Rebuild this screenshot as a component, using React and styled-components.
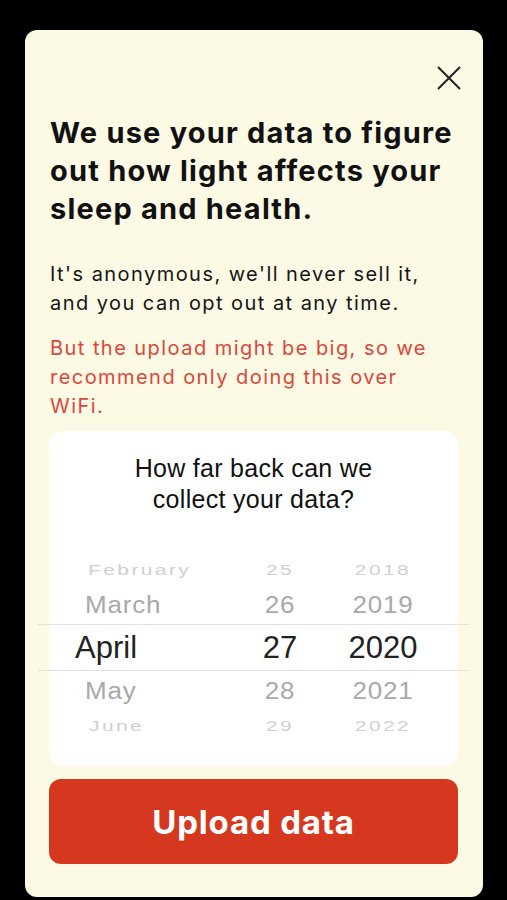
import styled, { createGlobalStyle } from 'styled-components'

const GlobalStyle = createGlobalStyle`
    html, body {
        margin: 0;
        padding: 0;
        background: #000;
    }
`

const Page = styled.div`
    width: 507px;
    height: 900px;
    padding: 30px 24px 0 25px;
    box-sizing: border-box;
    background: #000;
`

const Sheet = styled.div`
    width: 458px;
    height: 867px;
    box-sizing: border-box;
    background: #fcf9e4;
    border-radius: 12px;
    padding: 36px 22px 0 24px;
    display: flex;
    flex-direction: column;
`

const CloseRow = styled.div`
    display: flex;
    justify-content: flex-end;
`

const CloseButton = styled.button`
    width: 24px;
    height: 24px;
    padding: 0;
    border: none;
    background: transparent;
    cursor: pointer;
`

const Heading = styled.h1`
    margin: 24px 0 0 1px;
    max-width: 420px;
    font-family: Inter, "Liberation Sans", sans-serif;
    font-weight: 700;
    font-size: 29px;
    line-height: 38px;
    color: #111;
    letter-spacing: 1.2px;
`

const Paragraph = styled.p`
    margin: ${(p) => p.$top}px 0 0 1px;
    max-width: ${(p) => p.$width}px;
    font-family: Inter, "Liberation Sans", sans-serif;
    font-size: 20px;
    line-height: 29px;
    letter-spacing: 1.45px;
    color: ${(p) => p.$color};
`

const PickerCard = styled.div`
    position: relative;
    margin-top: 10px;
    width: 409px;
    height: 335px;
    box-sizing: border-box;
    background: #fff;
    border-radius: 14px;
    padding: 22px 0 0;
`

const Question = styled.div`
    text-align: center;
    font-family: "Liberation Sans", Arial, sans-serif;
    font-size: 25px;
    line-height: 31px;
    letter-spacing: 0.3px;
    color: #111;
`

const Wheel = styled.div`
    margin-top: 40px;
    display: flex;
    flex-direction: column;
`

const WheelRow = styled.div`
    display: grid;
    grid-template-columns: 195px 72px 134px;
    align-items: center;
    height: ${(p) => p.$height}px;
    font-family: "Liberation Sans", Arial, sans-serif;
    font-size: ${(p) => p.$size}px;
    color: ${(p) => p.$color};
    transform: scaleY(${(p) => p.$squash});
    letter-spacing: ${(p) => p.$spread}px;
`

const MonthCell = styled.span`
    padding-left: ${(p) => p.$indent}px;
`

const NumberCell = styled.span`
    text-align: center;
`

const SelectionLine = styled.div`
    position: absolute;
    left: -11px;
    right: -11px;
    top: ${(p) => p.$top}px;
    height: 1px;
    background: #e2e2e2;
`

const UploadButton = styled.button`
    margin-top: 13px;
    width: 409px;
    height: 85px;
    border: none;
    border-radius: 12px;
    background: #d6381f;
    color: #fff;
    font-family: Inter, "Liberation Sans", sans-serif;
    font-weight: 700;
    font-size: 33px;
    letter-spacing: 0.8px;
    cursor: pointer;
`

const rows = [
    { month: 'February', day: 25, year: 2018, height: 30, size: 21, color: '#d0d0d0', squash: 0.74, spread: 2.4, indent: 39 },
    { month: 'March', day: 26, year: 2019, height: 40, size: 26, color: '#a9a9a9', squash: 0.92, spread: 0.8, indent: 36 },
    { month: 'April', day: 27, year: 2020, height: 46, size: 31, color: '#222', squash: 1, spread: 0, indent: 26 },
    { month: 'May', day: 28, year: 2021, height: 40, size: 26, color: '#a9a9a9', squash: 0.92, spread: 0.8, indent: 36 },
    { month: 'June', day: 29, year: 2022, height: 30, size: 21, color: '#d0d0d0', squash: 0.74, spread: 2.4, indent: 40 },
]

function CloseIcon() {
    return (
        <svg width="24" height="24" viewBox="0 0 24 24">
            <path d="M1 1 L23 23 M23 1 L1 23" stroke="#222" strokeWidth="2" fill="none" />
        </svg>
    )
}

export default function App() {
    return (
        <Page>
            <GlobalStyle />
            <Sheet>
                <CloseRow>
                    <CloseButton aria-label="Close">
                        <CloseIcon />
                    </CloseButton>
                </CloseRow>
                <Heading>
                    We use your data to figure out how light affects your sleep and health.
                </Heading>
                <Paragraph $top={32} $width={400} $color="#151515">
                    It's anonymous, we'll never sell it, and you can opt out at any time.
                </Paragraph>
                <Paragraph $top={16} $width={395} $color="#d9483b">
                    But the upload might be big, so we recommend only doing this over WiFi.
                </Paragraph>
                <PickerCard>
                    <Question>
                        How far back can we
                        <br />
                        collect your data?
                    </Question>
                    <Wheel>
                        {rows.map((r) => (
                            <WheelRow
                                key={r.month}
                                $height={r.height}
                                $size={r.size}
                                $color={r.color}
                                $squash={r.squash}
                                $spread={r.spread}
                            >
                                <MonthCell $indent={r.indent}>{r.month}</MonthCell>
                                <NumberCell>{r.day}</NumberCell>
                                <NumberCell>{r.year}</NumberCell>
                            </WheelRow>
                        ))}
                    </Wheel>
                    <SelectionLine $top={193} />
                    <SelectionLine $top={239} />
                </PickerCard>
                <UploadButton>Upload data</UploadButton>
            </Sheet>
        </Page>
    )
}
